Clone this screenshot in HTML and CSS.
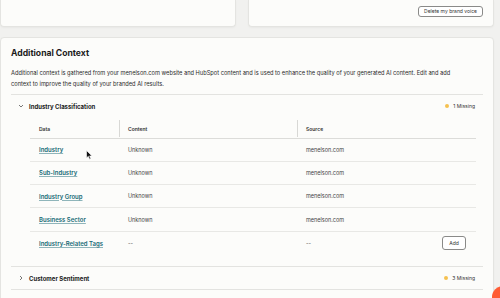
FILE: index.html
```html
<!DOCTYPE html>
<html>
<head>
<meta charset="utf-8">
<link rel="stylesheet" href="styles.css">
</head>
<body>
<div class="page">
  <div class="top">
    <div class="card card-top"></div>
    <div class="card card-top card-top-right">
      <button class="btn btn-small">Delete my brand voice</button>
    </div>
  </div>
  <div class="card main">
    <h2 class="title">Additional Context</h2>
    <p class="desc">Additional context is gathered from your menelson.com website and HubSpot content and is used to enhance the quality of your generated AI content. Edit and add context to improve the quality of your branded AI results.</p>

    <div class="section">
      <div class="sec-head">
        <svg class="chev" width="6" height="6" viewBox="0 0 6 6"><path d="M1 2 L3 4 L5 2" fill="none" stroke="#555" stroke-width="0.8"/></svg>
        <span class="sec-title">Industry Classification</span>
        <span class="status"><span class="dot"></span>1 Missing</span>
      </div>
      <table class="tbl">
        <thead>
          <tr><th class="c1">Data</th><th class="c2">Content</th><th class="c3">Source</th></tr>
        </thead>
        <tbody>
          <tr><td><a class="link">Industry</a></td><td>Unknown</td><td>menelson.com</td></tr>
          <tr><td><a class="link">Sub-Industry</a></td><td>Unknown</td><td>menelson.com</td></tr>
          <tr><td><a class="link">Industry Group</a></td><td>Unknown</td><td>menelson.com</td></tr>
          <tr><td><a class="link">Business Sector</a></td><td>Unknown</td><td>menelson.com</td></tr>
          <tr class="last"><td><a class="link">Industry-Related Tags</a></td><td>--</td><td><div class="src-add"><span>--</span><button class="btn btn-add">Add</button></div></td></tr>
        </tbody>
      </table>
    </div>

    <div class="section closed">
      <div class="sec-head">
        <svg class="chev" width="6" height="6" viewBox="0 0 6 6"><path d="M2 1 L4 3 L2 5" fill="none" stroke="#555" stroke-width="0.8"/></svg>
        <span class="sec-title">Customer Sentiment</span>
        <span class="status"><span class="dot"></span>3 Missing</span>
      </div>
    </div>
    <div class="section closed"></div>
  </div>
</div>
<svg class="cursor" width="7" height="10" viewBox="0 0 7 10"><path d="M0.5 0.5 L0.5 8 L2.3 6.3 L3.6 9.2 L4.8 8.7 L3.6 5.9 L6 5.9 Z" fill="#111" stroke="#fff" stroke-width="0.6"/></svg>
<div class="help"></div>
</body>
</html>
```

FILE: styles.css
```css
* { box-sizing: border-box; }
html, body { margin: 0; padding: 0; }
body {
  width: 500px;
  height: 298px;
  overflow: hidden;
  background: #f1f1ef;
  font-family: "Inter", "Liberation Sans", sans-serif;
  color: #222;
  position: relative;
}
.page { padding: 0 6px 0 0; height: 298px; overflow: hidden; }
.top {
  display: flex;
  gap: 12px;
  height: 27px;
}
.card {
  background: #fcfcfa;
  border: 1px solid #e4e4e1;
  border-radius: 4px;
  box-shadow: 0 1px 2px rgba(0,0,0,0.04);
}
.card-top {
  flex: 1;
  border-top: none;
  border-radius: 0 0 4px 4px;
}
.card-top-right {
  display: flex;
  justify-content: flex-end;
  align-items: flex-start;
  padding: 6px 10px 0 0;
}
.btn {
  font-family: inherit;
  background: #fff;
  border: 1px solid #8a8a88;
  border-radius: 3px;
  color: #333;
  cursor: pointer;
}
.btn-small {
  font-size: 5px;
  height: 11px;
  padding: 0 5px;
  line-height: 9px;
}
.main {
  margin-top: 10px;
  padding: 9px 10px 0 10px;
  height: 280px;
}
.title {
  margin: 0;
  font-size: 8.6px;
  line-height: 12px;
  font-weight: 700;
  color: #1b1b1b;
}
.desc {
  margin: 8px 0 0 0;
  width: 458px;
  font-size: 5.7px;
  line-height: 11px;
  color: #2a2a2a;
  padding-bottom: 5px;
}
.section {
  border-top: 1px solid #e3e3e0;
  padding-bottom: 11px;
}
.section.closed { padding-bottom: 0; }
.sec-head {
  display: flex;
  align-items: center;
  height: 22px;
  padding: 0 8px 0 7px;
}
.chev { margin-right: 5px; }
.sec-title {
  font-size: 6px;
  font-weight: 700;
  color: #1b1b1b;
  flex: 1;
}
.status {
  display: flex;
  align-items: center;
  font-size: 5px;
  color: #333;
}
.dot {
  width: 4px;
  height: 4px;
  border-radius: 50%;
  background: #f5c150;
  margin-right: 4px;
}
.tbl {
  margin: 1px 9px 0 19px;
  width: 446px;
  border-collapse: collapse;
  table-layout: fixed;
}
.tbl th {
  font-size: 5px;
  font-weight: 600;
  text-align: left;
  color: #333;
  height: 20px;
  padding: 3px 0 0 9px;
  border-bottom: 1px solid #dcdcd9;
}
.tbl th.c1 { width: 89px; }
.tbl th.c2 { width: 178px; }
.tbl th.c2, .tbl th.c3 {
  background-image: linear-gradient(#d8d8d5, #d8d8d5);
  background-size: 1px 17px;
  background-position: 0 2px;
  background-repeat: no-repeat;
}
.tbl td {
  font-size: 5.5px;
  color: #444;
  height: 23.3px;
  padding: 0 0 0 9px;
  border-bottom: 1px solid #e8e8e5;
}
.tbl tr.last td { border-bottom: none; height: 24px; }
.link {
  color: #166a76;
  font-size: 6px;
  font-weight: 600;
  text-decoration: underline;
  text-decoration-color: #8fb5ba;
  text-underline-offset: 1px;
}
.src-add {
  display: flex;
  align-items: center;
  justify-content: space-between;
  padding-right: 10px;
}
.btn-add {
  font-size: 5px;
  height: 14px;
  width: 24px;
  padding: 0;
}
.cursor {
  position: absolute;
  left: 86px;
  top: 150px;
}
.help {
  position: absolute;
  left: 492px;
  top: 286px;
  width: 22px;
  height: 22px;
  border-radius: 50%;
  background: #ff5c35;
}
```
